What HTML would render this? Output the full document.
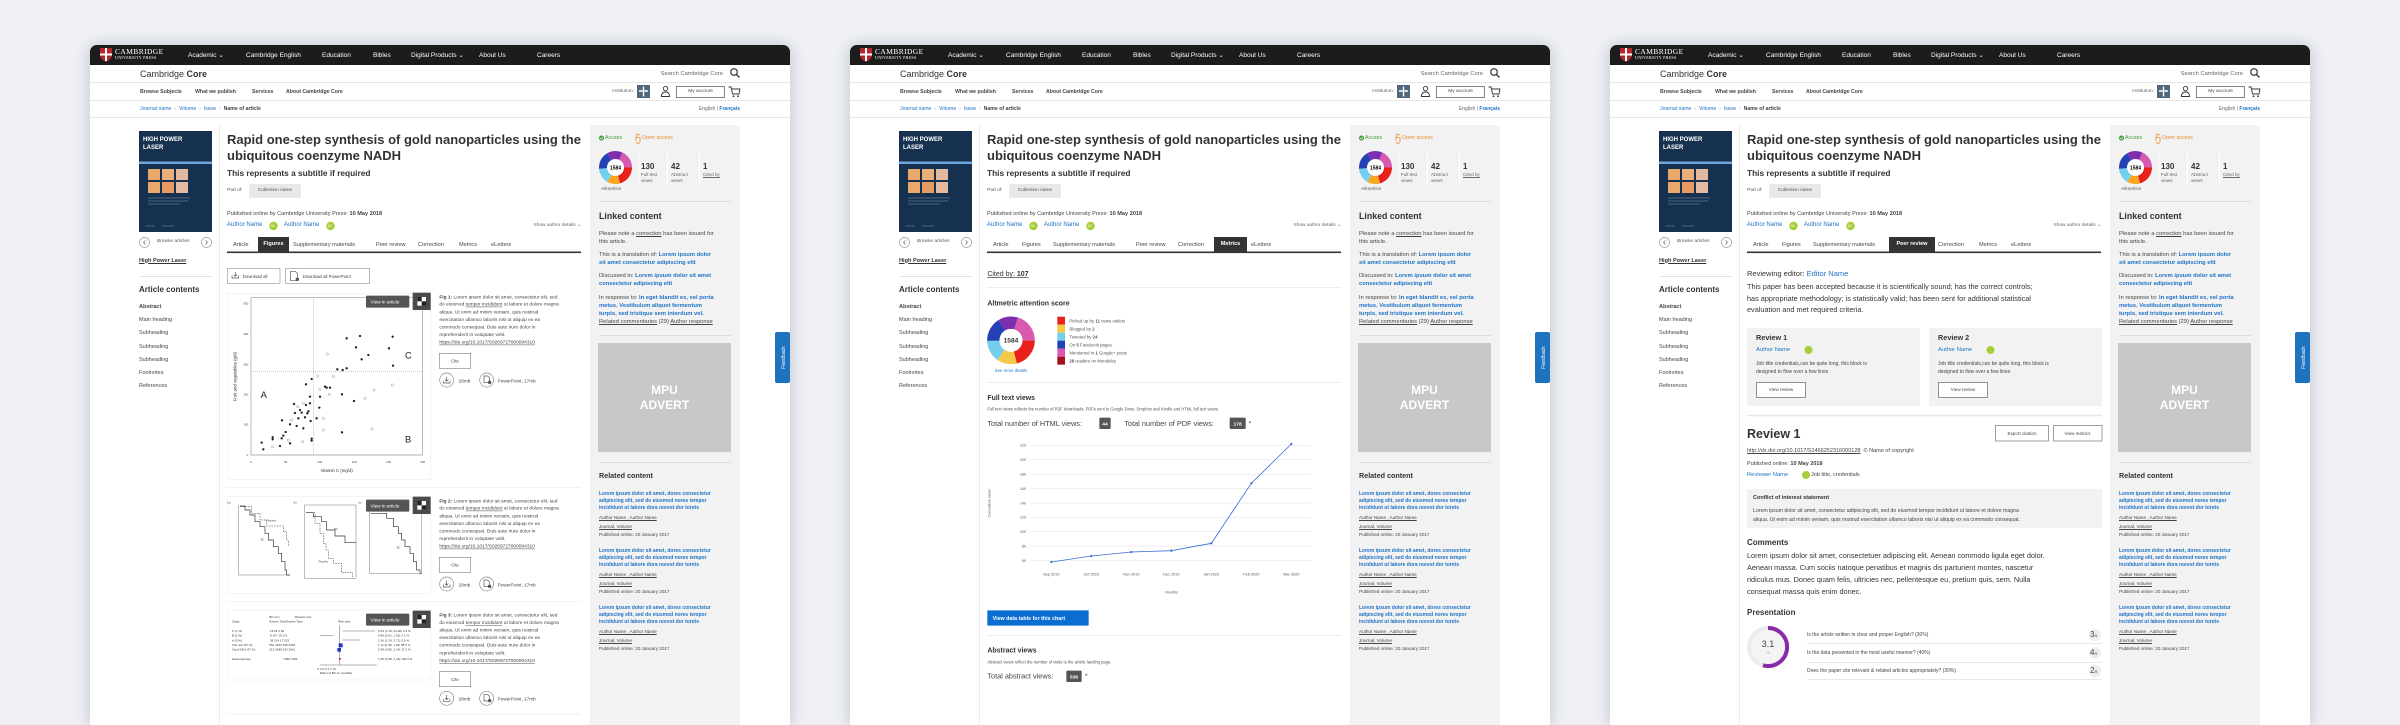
<!DOCTYPE html>
<html><head><meta charset="utf-8">
<style>
*{box-sizing:border-box}
body{margin:0;width:2400px;height:718px;background:#eef0f5;position:relative;overflow:hidden;font-family:"Liberation Sans",Arial,sans-serif;color:#333}
.p{position:absolute;top:45px;width:700px;height:680px;background:#fff;border-radius:7px 7px 0 0;box-shadow:0 0 14px rgba(60,70,110,.28);overflow:hidden}
.a{position:absolute;white-space:nowrap;line-height:1.2}
.b{font-weight:bold}
.bl{color:#1f72c6}
.u{text-decoration:underline}
.nv{font-size:6.5px;color:#fff;top:7px}
.nr{font-size:5.2px;color:#444;font-weight:bold;top:44px}
.tb{font-size:5.6px;color:#444;top:196.6px}
.tba{position:absolute;top:192px;height:15px;background:#333;color:#fff;font-weight:bold;font-size:5.6px;text-align:center;line-height:15px}
.lc{font-size:5.5px;color:#444;left:49px}
.sp{font-size:5.8px;line-height:8px;color:#444;left:509px;white-space:nowrap}
.rc{font-size:5px;line-height:7px;left:509px}
.rm{font-size:4.6px;color:#444;left:509px}
svg text{font-family:"Liberation Sans",Arial,sans-serif}
</style></head><body>

<!-- ================= PANEL 1 ================= -->
<div class="p" style="left:90px">
<div class="a" style="left:0;top:0;width:700px;height:20px;background:#1c1c1c"></div>
<div class="a" style="left:500px;top:80px;width:150px;height:620px;background:#f2f2f2;border-radius:3px"></div>
<svg class="a" style="left:0;top:0" width="700" height="680">
<path d="M10 3H22V10Q22 14 16 17Q10 14 10 10Z" fill="#b2282e"/><path d="M15 3H17V16H15ZM10 8.5H22V10.5H10Z" fill="#fff"/>
<path d="M0 37.5H700M0 55.5H700M0 72.5H700" stroke="#e6e6e6"/>
<path d="M129.5 79V680" stroke="#ececec"/>
<circle cx="644" cy="27" r="3.3" stroke="#333" stroke-width="1.2" fill="none"/><path d="M646.5 29.5L649.5 32.5" stroke="#333" stroke-width="1.3"/>
<rect x="547" y="40" width="13" height="13" fill="#51677d"/><path d="M553.5 41.5V51.5M549 46H558" stroke="#fff" stroke-width="1.4"/>
<circle cx="575.5" cy="43.5" r="2.2" stroke="#333" fill="none" stroke-width=".9"/><path d="M571.5 51.5Q571.5 47 575.5 47Q579.5 47 579.5 51.5Z" stroke="#333" fill="none" stroke-width=".9"/>
<rect x="586.5" y="41.5" width="48" height="11" stroke="#666" fill="none" stroke-width=".8"/>
<path d="M638.5 42H641L642.5 49H649L650 44H641.5" stroke="#333" fill="none" stroke-width=".9"/><circle cx="643.5" cy="51.3" r=".9" fill="#333"/><circle cx="648" cy="51.3" r=".9" fill="#333"/>
<rect x="49" y="86" width="73" height="101" fill="#16314f"/><rect x="49" y="116.5" width="73" height="2.5" fill="#6fa6db"/>
<rect x="58" y="124" width="12" height="11" fill="#e8a96a"/><rect x="72" y="124" width="12" height="11" fill="#e9b07a"/><rect x="86" y="124" width="12" height="11" fill="#e5b8a0"/>
<rect x="58" y="137" width="12" height="11" fill="#e8a96a"/><rect x="72" y="137" width="12" height="11" fill="#e79c62"/><rect x="86" y="137" width="12" height="11" fill="#e5b8a0"/>
<path d="M58 153H100M58 156H98M58 159H90M55 181H65M72 181H84" stroke="#5e7792" stroke-width=".8"/>
<circle cx="54.5" cy="197.5" r="5" stroke="#999" fill="#fff" stroke-width=".7"/><path d="M55.5 195.5L53.5 197.5L55.5 199.5" stroke="#666" fill="none" stroke-width=".7"/>
<circle cx="116.5" cy="197.5" r="5" stroke="#999" fill="#fff" stroke-width=".7"/><path d="M115.5 195.5L117.5 197.5L115.5 199.5" stroke="#666" fill="none" stroke-width=".7"/>
<path d="M49 231.5H122" stroke="#e2e2e2"/>
<rect x="137" y="206.5" width="354" height="1.6" fill="#333"/>
<circle cx="183.5" cy="181" r="4.2" fill="#a6ce39"/><circle cx="240.5" cy="181" r="4.2" fill="#a6ce39"/>
<circle cx="511.5" cy="93" r="2.5" fill="#3b9c37"/><path d="M510.3 93L511.2 94L512.9 92" stroke="#fff" stroke-width=".7" fill="none"/>
<path d="M546 95.5V92.5H550V96.5A2 2 0 0 1 546 96.5M546.6 92.5V90.5A1.4 1.4 0 0 1 549.4 90.5" stroke="#ee8a2d" fill="none" stroke-width=".8"/>
<g fill="none" stroke-width="8"><circle cx="525.5" cy="122.5" r="12.5" stroke="#e8221b" stroke-dasharray="16 80" stroke-dashoffset="0"/><circle cx="525.5" cy="122.5" r="12.5" stroke="#f7a823" stroke-dasharray="10 80" stroke-dashoffset="-16"/><circle cx="525.5" cy="122.5" r="12.5" stroke="#74cfee" stroke-dasharray="12 80" stroke-dashoffset="-26"/><circle cx="525.5" cy="122.5" r="12.5" stroke="#2440b5" stroke-dasharray="14 80" stroke-dashoffset="-38"/><circle cx="525.5" cy="122.5" r="12.5" stroke="#7b2fb0" stroke-dasharray="12 80" stroke-dashoffset="-52"/><circle cx="525.5" cy="122.5" r="12.5" stroke="#d85ab0" stroke-dasharray="15 80" stroke-dashoffset="-64"/></g>
<circle cx="525.5" cy="122.5" r="8.3" fill="#fff"/><text x="525.5" y="124.3" font-size="5" text-anchor="middle" font-weight="bold">1584</text>
<path d="M548.5 106V139M577.5 106V139M609.5 106V139" stroke="#fff" stroke-width="1"/>
<path d="M509 156.5H641M509 290.5H641M509 417.5H641" stroke="#dcdcdc"/>
<rect x="508" y="298" width="133" height="109" fill="#c8c8c8"/>
<rect x="685" y="287" width="15" height="51" rx="2" fill="#1e73be"/><text transform="translate(695 312.5) rotate(-90)" font-size="5.2" fill="#fff" text-anchor="middle">Feedback</text>
</svg>
<div class="a" style="left:25px;top:2px;font-family:'Liberation Serif',serif;font-size:7.5px;color:#fff;letter-spacing:.4px">CAMBRIDGE</div>
<div class="a" style="left:25px;top:11px;font-family:'Liberation Serif',serif;font-size:4px;color:#fff;letter-spacing:.3px">UNIVERSITY PRESS</div>
<div class="a nv" style="left:98px">Academic ⌄</div><div class="a nv" style="left:156px">Cambridge English</div><div class="a nv" style="left:232px">Education</div><div class="a nv" style="left:283px">Bibles</div><div class="a nv" style="left:321px">Digital Products ⌄</div><div class="a nv" style="left:389px">About Us</div><div class="a nv" style="left:447px">Careers</div>
<div class="a" style="left:50px;top:23.6px;font-size:9px;color:#333">Cambridge <b>Core</b></div>
<div class="a" style="right:67px;top:25.5px;font-size:5.8px;color:#666">Search Cambridge Core</div>
<div class="a nr" style="left:50px">Browse Subjects</div><div class="a nr" style="left:105px">What we publish</div><div class="a nr" style="left:162px">Services</div><div class="a nr" style="left:196px">About Cambridge Core</div>
<div class="a" style="right:156px;top:44px;font-size:4.8px;color:#666">Institution:</div>
<div class="a" style="left:586px;top:44px;width:49px;text-align:center;font-size:4.8px;color:#444">My account</div>
<div class="a" style="left:50px;top:61px;font-size:5.2px;color:#999"><span class="bl">Journal name</span> &nbsp;›&nbsp; <span class="bl">Volume</span> &nbsp;›&nbsp; <span class="bl">Issue</span> &nbsp;›&nbsp; <b style="color:#444">Name of article</b></div>
<div class="a" style="right:50px;top:61px;font-size:5px;color:#666">English | <b class="bl">Français</b></div>
<div class="a b" style="left:53px;top:92px;font-size:6px;color:#fff;line-height:7.5px">HIGH POWER<br>LASER</div>
<div class="a" style="left:67px;top:194.3px;font-size:4.8px;color:#555">Browse articles</div>
<div class="a b u" style="left:49px;top:212.6px;font-size:5.6px;color:#333">High Power Laser</div>
<div class="a b" style="left:49px;top:240.2px;font-size:8px">Article contents</div>
<div class="a lc b" style="top:258.7px">Abstract</div><div class="a lc" style="top:271.7px">Main heading</div><div class="a lc" style="top:284.7px">Subheading</div><div class="a lc" style="top:298.7px">Subheading</div><div class="a lc" style="top:311.7px">Subheading</div><div class="a lc" style="top:324.7px">Footnotes</div><div class="a lc" style="top:337.7px">References</div>
<div class="a b" style="left:137px;top:87px;font-size:13px;line-height:15.5px">Rapid one-step synthesis of gold nanoparticles using the<br>ubiquitous coenzyme NADH</div>
<div class="a b" style="left:137px;top:124px;font-size:8.3px">This represents a subtitle if required</div>
<div class="a" style="left:137px;top:143px;font-size:4.8px;color:#555">Part of:</div>
<div class="a" style="left:159px;top:139px;width:52px;height:14px;background:#e8e8e8;border-radius:2px;font-size:4.8px;line-height:14px;text-align:center;color:#555">Collection name</div>
<div class="a" style="left:137px;top:165.6px;font-size:5.6px;color:#444">Published online by Cambridge University Press: <b>10 May 2018</b></div>
<div class="a bl" style="left:137px;top:177.4px;font-size:6px">Author Name</div><div class="a bl" style="left:194px;top:177.4px;font-size:6px">Author Name</div>
<div class="a" style="left:181.3px;top:179px;font-size:3.6px;color:#fff">iD</div><div class="a" style="left:238.3px;top:179px;font-size:3.6px;color:#fff">iD</div>
<div class="a" style="right:209px;top:178px;font-size:4.8px;color:#666">Show author details ⌄</div>
<div class="a" style="left:515px;top:89.8px;font-size:5.3px;color:#3b9c37">Access</div><div class="a" style="left:552px;top:89.8px;font-size:5.3px;color:#ee8a2d">Open access</div>
<div class="a" style="left:511px;top:141.2px;font-size:4.6px;color:#555">Altmetrics</div>
<div class="a b" style="left:551px;top:117px;font-size:8px">130</div><div class="a" style="left:551px;top:127px;font-size:4.6px;line-height:6.2px;color:#666">Full text<br>views</div>
<div class="a b" style="left:581px;top:117px;font-size:8px">42</div><div class="a" style="left:581px;top:127px;font-size:4.6px;line-height:6.2px;color:#666">Abstract<br>views</div>
<div class="a b" style="left:613px;top:117px;font-size:8px">1</div><div class="a u" style="left:613px;top:127px;font-size:4.6px;color:#666">Cited by</div>
<div class="a b" style="left:509px;top:165.7px;font-size:8.8px">Linked content</div>
<div class="a sp" style="top:185px">Please note a <u>correction</u> has been issued for<br>this article.</div>
<div class="a sp" style="top:206px">This is a translation of: <b class="bl">Lorem ipsum dolor</b><br><b class="bl">sit amet consectetur adipiscing elit</b></div>
<div class="a sp" style="top:227px">Discussed in: <b class="bl">Lorem ipsum dolor sit amet</b><br><b class="bl">consectetur adipiscing elit</b></div>
<div class="a sp" style="top:249px">In response to: <b class="bl">In eget blandit ex, vel porta</b><br><b class="bl">metus. Vestibulum aliquet fermentum</b><br><b class="bl">turpis, sed tristique sem interdum vel.</b><br><u>Related commentaries</u> (29) <u>Author response</u></div>
<div class="a b" style="left:508px;top:338px;width:133px;text-align:center;font-size:12px;line-height:14.5px;color:#fff">MPU<br>ADVERT</div>
<div class="a b" style="left:509px;top:426.7px;font-size:7.2px">Related content</div>
<div class="a rc b bl" style="top:445.5px">Lorem ipsum dolor sit amet, dores consectetur<br>adipiscing elit, sed do eiusmod nores tempor<br>incididunt ut labore dora norest dor torets</div>
<div class="a rm u" style="top:470px">Author Name , Author Name</div><div class="a rm u" style="top:479px">Journal, Volume</div><div class="a rm" style="top:487px">Published online: 20 January 2017</div>
<div class="a rc b bl" style="top:502.5px">Lorem ipsum dolor sit amet, dores consectetur<br>adipiscing elit, sed do eiusmod nores tempor<br>incididunt ut labore dora norest dor torets</div>
<div class="a rm u" style="top:527px">Author Name , Author Name</div><div class="a rm u" style="top:536px">Journal, Volume</div><div class="a rm" style="top:544px">Published online: 20 January 2017</div>
<div class="a rc b bl" style="top:559.5px">Lorem ipsum dolor sit amet, dores consectetur<br>adipiscing elit, sed do eiusmod nores tempor<br>incididunt ut labore dora norest dor torets</div>
<div class="a rm u" style="top:584px">Author Name , Author Name</div><div class="a rm u" style="top:593px">Journal, Volume</div><div class="a rm" style="top:601px">Published online: 20 January 2017</div>
<!-- tabs -->
<div class="a tb" style="left:143px">Article</div>
<div class="tba" style="left:168px;width:31px">Figures</div>
<div class="a tb" style="left:203px">Supplementary materials</div><div class="a tb" style="left:286px">Peer review</div><div class="a tb" style="left:328px">Correction</div><div class="a tb" style="left:369px">Metrics</div><div class="a tb" style="left:401px">eLetters</div>
<!-- main: figures -->
<svg class="a" style="left:0;top:0" width="700" height="680">
<g transform="translate(130 205) scale(.33333)" font-size="14" fill="#444">
<rect x="22" y="55" width="158" height="45" fill="#fff" stroke="#999" stroke-width="2"/><text x="68" y="84" font-size="13">Download all</text>
<path d="M36 76v8h20v-8M46 66v13M41 74l5 5 5-5" stroke="#555" stroke-width="2" fill="none"/>
<rect x="197" y="55" width="252" height="45" fill="#fff" stroke="#999" stroke-width="2"/><text x="248" y="84" font-size="13">Download all PowerPoint</text>
<path d="M212 64h14l6 6v22h-20z" stroke="#555" stroke-width="2" fill="none"/><circle cx="232" cy="88" r="5" fill="#555"/>
<rect x="22" y="130" width="610" height="558" fill="#fff" stroke="#eee" stroke-width="2"/>
<path d="M93 143V615H608V143H93" stroke="#999" stroke-width="2" fill="none"/>
<path d="M280 143V615M93 364H608" stroke="#aaa" stroke-width="2" stroke-dasharray="3 3"/>
<g font-size="9" text-anchor="end"><text x="85" y="163">500</text><text x="85" y="255">400</text><text x="85" y="346">300</text><text x="85" y="437">200</text><text x="85" y="527">100</text><text x="85" y="618">0</text></g>
<g font-size="9" text-anchor="middle"><text x="93" y="639">0</text><text x="197" y="639">50</text><text x="299" y="639">100</text><text x="403" y="639">150</text><text x="506" y="639">200</text><text x="608" y="639">250</text></g>
<text x="350" y="666" font-size="13" text-anchor="middle" fill="#333">Vitamin C (mg/d)</text>
<text transform="translate(50 380) rotate(-90)" font-size="13" text-anchor="middle" fill="#333">Fruit and vegetables (g/d)</text>
<text x="122" y="444" font-size="28" fill="#222">A</text><text x="555" y="578" font-size="28" fill="#222">B</text><text x="555" y="326" font-size="28" fill="#222">C</text>
<g fill="#222"><circle cx="125" cy="578" r="3.5"/><circle cx="130" cy="598" r="3.5"/><circle cx="158" cy="562" r="3.5"/><circle cx="158" cy="568" r="3.5"/><circle cx="180" cy="588" r="3.5"/><circle cx="185" cy="565" r="3.5"/><circle cx="190" cy="557" r="3.5"/><circle cx="186" cy="511" r="3.5"/><circle cx="197" cy="546" r="3.5"/><circle cx="210" cy="523" r="3.5"/><circle cx="210" cy="580" r="3.5"/><circle cx="222" cy="462" r="3.5"/><circle cx="225" cy="489" r="3.5"/><circle cx="230" cy="528" r="3.5"/><circle cx="235" cy="505" r="3.5"/><circle cx="240" cy="480" r="3.5"/><circle cx="245" cy="488" r="3.5"/><circle cx="250" cy="535" r="3.5"/><circle cx="255" cy="502" r="3.5"/><circle cx="258" cy="465" r="3.5"/><circle cx="262" cy="490" r="3.5"/><circle cx="265" cy="484" r="3.5"/><circle cx="270" cy="460" r="3.5"/><circle cx="272" cy="513" r="3.5"/><circle cx="275" cy="566" r="3.5"/><circle cx="270" cy="440" r="3.5"/><circle cx="275" cy="387" r="3.5"/><circle cx="258" cy="403" r="3.5"/><circle cx="300" cy="440" r="3.5"/><circle cx="298" cy="473" r="3.5"/><circle cx="290" cy="505" r="3.5"/><circle cx="315" cy="410" r="3.5"/><circle cx="320" cy="413" r="3.5"/><circle cx="330" cy="413" r="3.5"/><circle cx="366" cy="433" r="3.5"/><circle cx="352" cy="358" r="3.5"/><circle cx="368" cy="360" r="3.5"/><circle cx="380" cy="355" r="3.5"/><circle cx="380" cy="265" r="3.5"/><circle cx="408" cy="292" r="3.5"/><circle cx="420" cy="258" r="3.5"/><circle cx="425" cy="328" r="3.5"/><circle cx="445" cy="315" r="3.5"/><circle cx="507" cy="295" r="3.5"/><circle cx="518" cy="260" r="3.5"/><circle cx="519" cy="347" r="3.5"/><circle cx="402" cy="453" r="3.5"/><circle cx="366" cy="547" r="3.5"/><circle cx="275" cy="572" r="3.5"/></g>
<g fill="none" stroke="#999" stroke-width="1.5"><circle cx="293" cy="378" r="3.5"/><circle cx="322" cy="312" r="3.5"/><circle cx="340" cy="380" r="3.5"/><circle cx="310" cy="505" r="3.5"/><circle cx="435" cy="445" r="3.5"/><circle cx="462" cy="420" r="3.5"/><circle cx="517" cy="405" r="3.5"/><circle cx="250" cy="460" r="3.5"/><circle cx="233" cy="470" r="3.5"/><circle cx="215" cy="510" r="3.5"/><circle cx="248" cy="575" r="3.5"/><circle cx="205" cy="570" r="3.5"/><circle cx="158" cy="590" r="3.5"/><circle cx="310" cy="540" r="3.5"/><circle cx="456" cy="537" r="3.5"/><circle cx="328" cy="433" r="3.5"/><circle cx="300" cy="418" r="3.5"/></g>
<!-- fig1 overlays -->
<rect x="438" y="137" width="130" height="36" rx="3" fill="#555"/><text x="452" y="160" fill="#fff">View in article</text>
<rect x="578" y="128" width="54" height="52" fill="#4a4a4a"/><rect x="592" y="141" width="26" height="26" fill="#fff"/><rect x="592" y="141" width="13" height="13" fill="#222"/><rect x="605" y="154" width="13" height="13" fill="#222"/>
<g font-size="14.5"><text x="658" y="145"><tspan font-weight="bold">Fig 1:</tspan> Lorem ipsum dolor sit amet, consectetur  elit, sed</text><text x="658" y="167">do eiusmod <tspan text-decoration="underline">tempor incididunt</tspan> ut labore et dolore magna</text><text x="658" y="190">aliqua. Ut enim ad minim veniam, quis nostrud</text><text x="658" y="213">exercitation ullamco laboris nisi ut aliquip ex ea</text><text x="658" y="235">commodo consequat. Duis aute irure dolor in</text><text x="658" y="258">reprehenderit in voluptate velit.</text><text x="658" y="281" text-decoration="underline">https://doi.org/10.1017/S0269727000004310</text></g>
<rect x="658" y="310" width="94" height="45" fill="#fff" stroke="#888" stroke-width="2"/><text x="705" y="338" font-size="13" text-anchor="middle">Cite</text>
<circle cx="680" cy="390" r="21" fill="none" stroke="#888" stroke-width="2"/><path d="M670 392v7h20v-7M680 380v14M675 389l5 5 5-5" stroke="#555" stroke-width="2" fill="none"/><text x="716" y="397">28mb</text>
<circle cx="800" cy="390" r="21" fill="none" stroke="#888" stroke-width="2"/><path d="M792 378h11l5 5v15h-16z" stroke="#555" stroke-width="2" fill="none"/><circle cx="809" cy="397" r="5" fill="#555"/><text x="833" y="397">PowerPoint, 17mb</text>
<path d="M22 712H1085" stroke="#ccc" stroke-width="2" stroke-dasharray="3 5"/>
<!-- fig2 -->
<rect x="22" y="740" width="610" height="290" fill="#fff" stroke="#eee" stroke-width="2"/>
<g fill="none" stroke="#777" stroke-width="1.5"><path d="M55 765V975H210"/><path d="M253 765V985H408V765Z"/><path d="M448 765V970H605V765"/></g>
<g fill="none" stroke="#333" stroke-width="2"><path d="M60 768H75V780H90V795H105V815H120V830H135V850H145V870H160V890H175V910H185V935H195V960H200V975H210"/><path d="M258 788H280V800H305V815H320V840H345V858H375V878H408"/><path d="M452 790H500V805H520V830H535V850H545V870H555V890H570V910H580V935H590V960H600V970H605"/></g>
<g fill="none" stroke="#333" stroke-width="1.5" stroke-dasharray="5 3"><path d="M60 770H95V790H120V810H140V828H190V845H200V870H205V890"/><path d="M258 788H285V820H300V850H310V880H318V900H325V925H340V940H365V968H398V985"/></g>
<g font-size="8"><text x="140" y="815">Placebo</text><text x="122" y="872">BC</text><text x="342" y="840">BC</text><text x="296" y="938">Placebo</text><text x="530" y="895">BC</text><text x="22" y="760">(a)</text><text x="220" y="760">(b)</text><text x="415" y="760">(c)</text></g>
<rect x="438" y="749" width="130" height="36" rx="3" fill="#555"/><text x="452" y="772" fill="#fff">View in article</text>
<rect x="578" y="740" width="54" height="52" fill="#4a4a4a"/><rect x="592" y="753" width="26" height="26" fill="#fff"/><rect x="592" y="753" width="13" height="13" fill="#222"/><rect x="605" y="766" width="13" height="13" fill="#222"/>
<g font-size="14.5"><text x="658" y="757"><tspan font-weight="bold">Fig 2:</tspan> Lorem ipsum dolor sit amet, consectetur  elit, sed</text><text x="658" y="779">do eiusmod <tspan text-decoration="underline">tempor incididunt</tspan> ut labore et dolore magna</text><text x="658" y="802">aliqua. Ut enim ad minim veniam, quis nostrud</text><text x="658" y="825">exercitation ullamco laboris nisi ut aliquip ex ea</text><text x="658" y="847">commodo consequat. Duis aute irure dolor in</text><text x="658" y="870">reprehenderit in voluptate velit.</text><text x="658" y="893" text-decoration="underline">https://doi.org/10.1017/S0269727000004310</text></g>
<rect x="658" y="922" width="94" height="45" fill="#fff" stroke="#888" stroke-width="2"/><text x="705" y="950" font-size="13" text-anchor="middle">Cite</text>
<circle cx="680" cy="1002" r="21" fill="none" stroke="#888" stroke-width="2"/><path d="M670 1004v7h20v-7M680 992v14M675 1001l5 5 5-5" stroke="#555" stroke-width="2" fill="none"/><text x="716" y="1009">28mb</text>
<circle cx="800" cy="1002" r="21" fill="none" stroke="#888" stroke-width="2"/><path d="M792 990h11l5 5v15h-16z" stroke="#555" stroke-width="2" fill="none"/><circle cx="809" cy="1009" r="5" fill="#555"/><text x="833" y="1009">PowerPoint, 17mb</text>
<path d="M22 1055H1085" stroke="#ccc" stroke-width="2" stroke-dasharray="3 5"/>
<!-- fig3 -->
<rect x="22" y="1080" width="610" height="210" fill="#fff" stroke="#eee" stroke-width="2"/>
<g font-size="9" fill="#333"><text x="148" y="1104">BC arm</text><text x="224" y="1104">Placebo arm</text><text x="36" y="1118">Study</text><text x="148" y="1118">Events  Total  Events  Total</text><text x="354" y="1118">Risk ratio</text>
<text x="36" y="1146">C (1 %)</text><text x="150" y="1146">13      81      2      69</text><text x="36" y="1160">B (2 %)</text><text x="150" y="1160">8      167    19     171</text><text x="36" y="1174">A (3 %)</text><text x="150" y="1174">38     214    17     223</text><text x="36" y="1188">The rest (57 %)</text><text x="148" y="1188">551   4160   498   4183</text><text x="36" y="1202">Cig 6-18/d (37 %)</text><text x="148" y="1202">313   2688   314   2641</text><text x="36" y="1230">Heterogeneity</text><text x="190" y="1230">7280          7284</text>
<text x="474" y="1146">0·54 (1·28, 23·60) 0·3 %</text><text x="474" y="1160">0·46 (0·21, 1·02)  2·1 %</text><text x="474" y="1174">2·16 (1·24, 3·71)  3·0 %</text><text x="474" y="1188">1·11 (0·99, 1·26)  58·5 %</text><text x="474" y="1202">0·99 (0·85, 1·14)  37·2 %</text><text x="474" y="1230">1·06 (0·98, 1·16)  100·0 %</text>
<text x="292" y="1260">0·3 0·5    1     2          10</text><text x="300" y="1272">Effect of BC on mortality</text></g>
<path d="M358 1125V1245M300 1245H470M300 1156H340M368 1143H465M368 1170H420" stroke="#666" stroke-width="1.5"/>
<rect x="356" y="1180" width="12" height="12" fill="#2233cc"/><rect x="352" y="1194" width="11" height="11" fill="#2233cc"/><rect x="358" y="1224" width="5" height="5" fill="#d22"/>
<rect x="438" y="1091" width="130" height="36" rx="3" fill="#555"/><text x="452" y="1114" fill="#fff">View in article</text>
<rect x="578" y="1082" width="54" height="52" fill="#4a4a4a"/><rect x="592" y="1095" width="26" height="26" fill="#fff"/><rect x="592" y="1095" width="13" height="13" fill="#222"/><rect x="605" y="1108" width="13" height="13" fill="#222"/>
<g font-size="14.5"><text x="658" y="1099"><tspan font-weight="bold">Fig 3:</tspan> Lorem ipsum dolor sit amet, consectetur  elit, sed</text><text x="658" y="1122">do eiusmod <tspan text-decoration="underline">tempor incididunt</tspan> ut labore et dolore magna</text><text x="658" y="1145">aliqua. Ut enim ad minim veniam, quis nostrud</text><text x="658" y="1167">exercitation ullamco laboris nisi ut aliquip ex ea</text><text x="658" y="1190">commodo consequat. Duis aute irure dolor in</text><text x="658" y="1213">reprehenderit in voluptate velit.</text><text x="658" y="1236" text-decoration="underline">https://doi.org/10.1017/S0269727000004310</text></g>
<rect x="658" y="1265" width="94" height="45" fill="#fff" stroke="#888" stroke-width="2"/><text x="705" y="1293" font-size="13" text-anchor="middle">Cite</text>
<circle cx="680" cy="1345" r="21" fill="none" stroke="#888" stroke-width="2"/><path d="M670 1347v7h20v-7M680 1335v14M675 1344l5 5 5-5" stroke="#555" stroke-width="2" fill="none"/><text x="716" y="1352">28mb</text>
<circle cx="800" cy="1345" r="21" fill="none" stroke="#888" stroke-width="2"/><path d="M792 1333h11l5 5v15h-16z" stroke="#555" stroke-width="2" fill="none"/><circle cx="809" cy="1352" r="5" fill="#555"/><text x="833" y="1352">PowerPoint, 17mb</text>
<path d="M22 1392H1085" stroke="#ccc" stroke-width="2" stroke-dasharray="3 5"/>
</g></svg>
</div>

<!-- ================= PANEL 2 ================= -->
<div class="p" style="left:850px">
<div class="a" style="left:0;top:0;width:700px;height:20px;background:#1c1c1c"></div>
<div class="a" style="left:500px;top:80px;width:150px;height:620px;background:#f2f2f2;border-radius:3px"></div>
<svg class="a" style="left:0;top:0" width="700" height="680">
<path d="M10 3H22V10Q22 14 16 17Q10 14 10 10Z" fill="#b2282e"/><path d="M15 3H17V16H15ZM10 8.5H22V10.5H10Z" fill="#fff"/>
<path d="M0 37.5H700M0 55.5H700M0 72.5H700" stroke="#e6e6e6"/>
<path d="M129.5 79V680" stroke="#ececec"/>
<circle cx="644" cy="27" r="3.3" stroke="#333" stroke-width="1.2" fill="none"/><path d="M646.5 29.5L649.5 32.5" stroke="#333" stroke-width="1.3"/>
<rect x="547" y="40" width="13" height="13" fill="#51677d"/><path d="M553.5 41.5V51.5M549 46H558" stroke="#fff" stroke-width="1.4"/>
<circle cx="575.5" cy="43.5" r="2.2" stroke="#333" fill="none" stroke-width=".9"/><path d="M571.5 51.5Q571.5 47 575.5 47Q579.5 47 579.5 51.5Z" stroke="#333" fill="none" stroke-width=".9"/>
<rect x="586.5" y="41.5" width="48" height="11" stroke="#666" fill="none" stroke-width=".8"/>
<path d="M638.5 42H641L642.5 49H649L650 44H641.5" stroke="#333" fill="none" stroke-width=".9"/><circle cx="643.5" cy="51.3" r=".9" fill="#333"/><circle cx="648" cy="51.3" r=".9" fill="#333"/>
<rect x="49" y="86" width="73" height="101" fill="#16314f"/><rect x="49" y="116.5" width="73" height="2.5" fill="#6fa6db"/>
<rect x="58" y="124" width="12" height="11" fill="#e8a96a"/><rect x="72" y="124" width="12" height="11" fill="#e9b07a"/><rect x="86" y="124" width="12" height="11" fill="#e5b8a0"/>
<rect x="58" y="137" width="12" height="11" fill="#e8a96a"/><rect x="72" y="137" width="12" height="11" fill="#e79c62"/><rect x="86" y="137" width="12" height="11" fill="#e5b8a0"/>
<path d="M58 153H100M58 156H98M58 159H90M55 181H65M72 181H84" stroke="#5e7792" stroke-width=".8"/>
<circle cx="54.5" cy="197.5" r="5" stroke="#999" fill="#fff" stroke-width=".7"/><path d="M55.5 195.5L53.5 197.5L55.5 199.5" stroke="#666" fill="none" stroke-width=".7"/>
<circle cx="116.5" cy="197.5" r="5" stroke="#999" fill="#fff" stroke-width=".7"/><path d="M115.5 195.5L117.5 197.5L115.5 199.5" stroke="#666" fill="none" stroke-width=".7"/>
<path d="M49 231.5H122" stroke="#e2e2e2"/>
<rect x="137" y="206.5" width="354" height="1.6" fill="#333"/>
<circle cx="183.5" cy="181" r="4.2" fill="#a6ce39"/><circle cx="240.5" cy="181" r="4.2" fill="#a6ce39"/>
<circle cx="511.5" cy="93" r="2.5" fill="#3b9c37"/><path d="M510.3 93L511.2 94L512.9 92" stroke="#fff" stroke-width=".7" fill="none"/>
<path d="M546 95.5V92.5H550V96.5A2 2 0 0 1 546 96.5M546.6 92.5V90.5A1.4 1.4 0 0 1 549.4 90.5" stroke="#ee8a2d" fill="none" stroke-width=".8"/>
<g fill="none" stroke-width="8"><circle cx="525.5" cy="122.5" r="12.5" stroke="#e8221b" stroke-dasharray="16 80" stroke-dashoffset="0"/><circle cx="525.5" cy="122.5" r="12.5" stroke="#f7a823" stroke-dasharray="10 80" stroke-dashoffset="-16"/><circle cx="525.5" cy="122.5" r="12.5" stroke="#74cfee" stroke-dasharray="12 80" stroke-dashoffset="-26"/><circle cx="525.5" cy="122.5" r="12.5" stroke="#2440b5" stroke-dasharray="14 80" stroke-dashoffset="-38"/><circle cx="525.5" cy="122.5" r="12.5" stroke="#7b2fb0" stroke-dasharray="12 80" stroke-dashoffset="-52"/><circle cx="525.5" cy="122.5" r="12.5" stroke="#d85ab0" stroke-dasharray="15 80" stroke-dashoffset="-64"/></g>
<circle cx="525.5" cy="122.5" r="8.3" fill="#fff"/><text x="525.5" y="124.3" font-size="5" text-anchor="middle" font-weight="bold">1584</text>
<path d="M548.5 106V139M577.5 106V139M609.5 106V139" stroke="#fff" stroke-width="1"/>
<path d="M509 156.5H641M509 290.5H641M509 417.5H641" stroke="#dcdcdc"/>
<rect x="508" y="298" width="133" height="109" fill="#c8c8c8"/>
<rect x="685" y="287" width="15" height="51" rx="2" fill="#1e73be"/><text transform="translate(695 312.5) rotate(-90)" font-size="5.2" fill="#fff" text-anchor="middle">Feedback</text>
</svg>
<div class="a" style="left:25px;top:2px;font-family:'Liberation Serif',serif;font-size:7.5px;color:#fff;letter-spacing:.4px">CAMBRIDGE</div>
<div class="a" style="left:25px;top:11px;font-family:'Liberation Serif',serif;font-size:4px;color:#fff;letter-spacing:.3px">UNIVERSITY PRESS</div>
<div class="a nv" style="left:98px">Academic ⌄</div><div class="a nv" style="left:156px">Cambridge English</div><div class="a nv" style="left:232px">Education</div><div class="a nv" style="left:283px">Bibles</div><div class="a nv" style="left:321px">Digital Products ⌄</div><div class="a nv" style="left:389px">About Us</div><div class="a nv" style="left:447px">Careers</div>
<div class="a" style="left:50px;top:23.6px;font-size:9px;color:#333">Cambridge <b>Core</b></div>
<div class="a" style="right:67px;top:25.5px;font-size:5.8px;color:#666">Search Cambridge Core</div>
<div class="a nr" style="left:50px">Browse Subjects</div><div class="a nr" style="left:105px">What we publish</div><div class="a nr" style="left:162px">Services</div><div class="a nr" style="left:196px">About Cambridge Core</div>
<div class="a" style="right:156px;top:44px;font-size:4.8px;color:#666">Institution:</div>
<div class="a" style="left:586px;top:44px;width:49px;text-align:center;font-size:4.8px;color:#444">My account</div>
<div class="a" style="left:50px;top:61px;font-size:5.2px;color:#999"><span class="bl">Journal name</span> &nbsp;›&nbsp; <span class="bl">Volume</span> &nbsp;›&nbsp; <span class="bl">Issue</span> &nbsp;›&nbsp; <b style="color:#444">Name of article</b></div>
<div class="a" style="right:50px;top:61px;font-size:5px;color:#666">English | <b class="bl">Français</b></div>
<div class="a b" style="left:53px;top:92px;font-size:6px;color:#fff;line-height:7.5px">HIGH POWER<br>LASER</div>
<div class="a" style="left:67px;top:194.3px;font-size:4.8px;color:#555">Browse articles</div>
<div class="a b u" style="left:49px;top:212.6px;font-size:5.6px;color:#333">High Power Laser</div>
<div class="a b" style="left:49px;top:240.2px;font-size:8px">Article contents</div>
<div class="a lc b" style="top:258.7px">Abstract</div><div class="a lc" style="top:271.7px">Main heading</div><div class="a lc" style="top:284.7px">Subheading</div><div class="a lc" style="top:298.7px">Subheading</div><div class="a lc" style="top:311.7px">Subheading</div><div class="a lc" style="top:324.7px">Footnotes</div><div class="a lc" style="top:337.7px">References</div>
<div class="a b" style="left:137px;top:87px;font-size:13px;line-height:15.5px">Rapid one-step synthesis of gold nanoparticles using the<br>ubiquitous coenzyme NADH</div>
<div class="a b" style="left:137px;top:124px;font-size:8.3px">This represents a subtitle if required</div>
<div class="a" style="left:137px;top:143px;font-size:4.8px;color:#555">Part of:</div>
<div class="a" style="left:159px;top:139px;width:52px;height:14px;background:#e8e8e8;border-radius:2px;font-size:4.8px;line-height:14px;text-align:center;color:#555">Collection name</div>
<div class="a" style="left:137px;top:165.6px;font-size:5.6px;color:#444">Published online by Cambridge University Press: <b>10 May 2018</b></div>
<div class="a bl" style="left:137px;top:177.4px;font-size:6px">Author Name</div><div class="a bl" style="left:194px;top:177.4px;font-size:6px">Author Name</div>
<div class="a" style="left:181.3px;top:179px;font-size:3.6px;color:#fff">iD</div><div class="a" style="left:238.3px;top:179px;font-size:3.6px;color:#fff">iD</div>
<div class="a" style="right:209px;top:178px;font-size:4.8px;color:#666">Show author details ⌄</div>
<div class="a" style="left:515px;top:89.8px;font-size:5.3px;color:#3b9c37">Access</div><div class="a" style="left:552px;top:89.8px;font-size:5.3px;color:#ee8a2d">Open access</div>
<div class="a" style="left:511px;top:141.2px;font-size:4.6px;color:#555">Altmetrics</div>
<div class="a b" style="left:551px;top:117px;font-size:8px">130</div><div class="a" style="left:551px;top:127px;font-size:4.6px;line-height:6.2px;color:#666">Full text<br>views</div>
<div class="a b" style="left:581px;top:117px;font-size:8px">42</div><div class="a" style="left:581px;top:127px;font-size:4.6px;line-height:6.2px;color:#666">Abstract<br>views</div>
<div class="a b" style="left:613px;top:117px;font-size:8px">1</div><div class="a u" style="left:613px;top:127px;font-size:4.6px;color:#666">Cited by</div>
<div class="a b" style="left:509px;top:165.7px;font-size:8.8px">Linked content</div>
<div class="a sp" style="top:185px">Please note a <u>correction</u> has been issued for<br>this article.</div>
<div class="a sp" style="top:206px">This is a translation of: <b class="bl">Lorem ipsum dolor</b><br><b class="bl">sit amet consectetur adipiscing elit</b></div>
<div class="a sp" style="top:227px">Discussed in: <b class="bl">Lorem ipsum dolor sit amet</b><br><b class="bl">consectetur adipiscing elit</b></div>
<div class="a sp" style="top:249px">In response to: <b class="bl">In eget blandit ex, vel porta</b><br><b class="bl">metus. Vestibulum aliquet fermentum</b><br><b class="bl">turpis, sed tristique sem interdum vel.</b><br><u>Related commentaries</u> (29) <u>Author response</u></div>
<div class="a b" style="left:508px;top:338px;width:133px;text-align:center;font-size:12px;line-height:14.5px;color:#fff">MPU<br>ADVERT</div>
<div class="a b" style="left:509px;top:426.7px;font-size:7.2px">Related content</div>
<div class="a rc b bl" style="top:445.5px">Lorem ipsum dolor sit amet, dores consectetur<br>adipiscing elit, sed do eiusmod nores tempor<br>incididunt ut labore dora norest dor torets</div>
<div class="a rm u" style="top:470px">Author Name , Author Name</div><div class="a rm u" style="top:479px">Journal, Volume</div><div class="a rm" style="top:487px">Published online: 20 January 2017</div>
<div class="a rc b bl" style="top:502.5px">Lorem ipsum dolor sit amet, dores consectetur<br>adipiscing elit, sed do eiusmod nores tempor<br>incididunt ut labore dora norest dor torets</div>
<div class="a rm u" style="top:527px">Author Name , Author Name</div><div class="a rm u" style="top:536px">Journal, Volume</div><div class="a rm" style="top:544px">Published online: 20 January 2017</div>
<div class="a rc b bl" style="top:559.5px">Lorem ipsum dolor sit amet, dores consectetur<br>adipiscing elit, sed do eiusmod nores tempor<br>incididunt ut labore dora norest dor torets</div>
<div class="a rm u" style="top:584px">Author Name , Author Name</div><div class="a rm u" style="top:593px">Journal, Volume</div><div class="a rm" style="top:601px">Published online: 20 January 2017</div>
<!-- tabs -->
<div class="a tb" style="left:143px">Article</div><div class="a tb" style="left:172px">Figures</div>
<div class="a tb" style="left:203px">Supplementary materials</div><div class="a tb" style="left:286px">Peer review</div><div class="a tb" style="left:328px">Correction</div>
<div class="tba" style="left:364px;width:33px">Metrics</div>
<div class="a tb" style="left:401px">eLetters</div>
<!-- main: metrics -->
<svg class="a" style="left:0;top:0" width="700" height="680">
<g transform="translate(130 205) scale(.33333)" fill="#333">
<text x="22" y="78" font-size="21" text-decoration="underline">Cited by: <tspan font-weight="bold">107</tspan></text>
<path d="M22 113H1085M22 397H1085M22 1157H1085" stroke="#e2e2e2" stroke-width="2"/>
<text x="22" y="166" font-size="21" font-weight="bold">Altmetric attention score</text>
<g fill="none" stroke-width="37"><circle cx="93" cy="271" r="53" stroke="#e8221b" stroke-dasharray="70 400"/><circle cx="93" cy="271" r="53" stroke="#f7c948" stroke-dasharray="45 400" stroke-dashoffset="-70"/><circle cx="93" cy="271" r="53" stroke="#74cfee" stroke-dasharray="50 400" stroke-dashoffset="-115"/><circle cx="93" cy="271" r="53" stroke="#2440b5" stroke-dasharray="55 400" stroke-dashoffset="-165"/><circle cx="93" cy="271" r="53" stroke="#7b2fb0" stroke-dasharray="45 400" stroke-dashoffset="-220"/><circle cx="93" cy="271" r="53" stroke="#d85ab0" stroke-dasharray="70 400" stroke-dashoffset="-265"/></g>
<circle cx="93" cy="271" r="34" fill="#fff"/><text x="93" y="278" font-size="20" font-weight="bold" text-anchor="middle">1584</text>
<text x="93" y="366" font-size="13" text-anchor="middle" fill="#1f72c6">See more details</text>
<rect x="232" y="200" width="23" height="24" fill="#e8221b"/><rect x="232" y="224" width="23" height="24" fill="#f7c948"/><rect x="232" y="248" width="23" height="24" fill="#74cfee"/><rect x="232" y="272" width="23" height="24" fill="#2440b5"/><rect x="232" y="296" width="23" height="24" fill="#d85ab0"/><rect x="232" y="320" width="23" height="24" fill="#a3101a"/>
<g font-size="13" fill="#555"><text x="268" y="217">Picked up by <tspan font-weight="bold">11</tspan> news outlets</text><text x="268" y="241">Blogged by <tspan font-weight="bold">2</tspan></text><text x="268" y="265">Tweeted by <tspan font-weight="bold">24</tspan></text><text x="268" y="289">On <tspan font-weight="bold">5</tspan> Facebook pages</text><text x="268" y="313">Mentioned in <tspan font-weight="bold">1</tspan> Google+ posts</text><text x="268" y="337"><tspan font-weight="bold">28</tspan> readers on Mendeley</text></g>
<text x="22" y="450" font-size="21" font-weight="bold">Full text views</text>
<text x="22" y="481" font-size="12.3" fill="#555">Full text views reflects the number of PDF downloads, PDFs sent to Google Drive, Dropbox and Kindle and HTML full text views.</text>
<text x="22" y="528" font-size="22" fill="#444">Total number of HTML views:</text><rect x="358" y="503" width="34" height="34" rx="3" fill="#555"/><text x="375" y="527" font-size="15" font-weight="bold" fill="#fff" text-anchor="middle">44</text>
<text x="433" y="528" font-size="22" fill="#444">Total number of PDF views:</text><rect x="749" y="503" width="48" height="34" rx="3" fill="#555"/><text x="773" y="527" font-size="15" font-weight="bold" fill="#fff" text-anchor="middle">178</text><text x="806" y="526" font-size="20">*</text>
<path d="M150 586H995M150 629H995M150 673H995M150 716H995M150 759H995M150 802H995M150 845H995M150 888H995M150 932H995" stroke="#e6e6e6" stroke-width="2"/>
<g font-size="11" fill="#555" text-anchor="end"><text x="138" y="590">220</text><text x="138" y="633">200</text><text x="138" y="677">180</text><text x="138" y="720">160</text><text x="138" y="763">140</text><text x="138" y="806">120</text><text x="138" y="849">100</text><text x="138" y="892">80</text><text x="138" y="936">60</text></g>
<g font-size="11.5" fill="#555" text-anchor="middle"><text x="214" y="976">Sep 2019</text><text x="334" y="976">Oct 2019</text><text x="454" y="976">Nov 2019</text><text x="574" y="976">Dec 2019</text><text x="694" y="976">Jan 2020</text><text x="814" y="976">Feb 2020</text><text x="934" y="976">Mar 2020</text><text x="575" y="1031">Months</text></g>
<text transform="translate(32 760) rotate(-90)" font-size="11" fill="#555" text-anchor="middle">Cumulative views</text>
<path d="M214 936L334 918L454 906L574 902L694 880L814 700L934 582" stroke="#3d6fd8" stroke-width="2.5" fill="none"/>
<g fill="#3d6fd8"><circle cx="214" cy="936" r="3.5"/><circle cx="334" cy="918" r="3.5"/><circle cx="454" cy="906" r="3.5"/><circle cx="574" cy="902" r="3.5"/><circle cx="694" cy="880" r="3.5"/><circle cx="814" cy="700" r="3.5"/><circle cx="934" cy="582" r="3.5"/></g>
<rect x="22" y="1081" width="304" height="46" rx="2" fill="#0a6ed1"/><text x="38" y="1110" font-size="16" font-weight="bold" fill="#fff">View data table for this chart</text>
<text x="22" y="1208" font-size="21" font-weight="bold">Abstract views</text>
<text x="22" y="1240" font-size="12.3" fill="#555">Abstract views reflect the number of visits to the article landing page.</text>
<text x="22" y="1286" font-size="22" fill="#444">Total abstract views:</text><rect x="259" y="1262" width="46" height="34" rx="3" fill="#555"/><text x="282" y="1286" font-size="15" font-weight="bold" fill="#fff" text-anchor="middle">536</text><text x="315" y="1284" font-size="20">*</text>
</g></svg>
</div>

<!-- ================= PANEL 3 ================= -->
<div class="p" style="left:1610px">
<div class="a" style="left:0;top:0;width:700px;height:20px;background:#1c1c1c"></div>
<div class="a" style="left:500px;top:80px;width:150px;height:620px;background:#f2f2f2;border-radius:3px"></div>
<div class="a" style="left:137px;top:283px;width:173px;height:78px;background:#f2f2f2"></div>
<div class="a" style="left:319px;top:283px;width:173px;height:78px;background:#f2f2f2"></div>
<div class="a" style="left:137px;top:444px;width:355px;height:39px;background:#f2f2f2"></div>
<svg class="a" style="left:0;top:0" width="700" height="680">
<path d="M10 3H22V10Q22 14 16 17Q10 14 10 10Z" fill="#b2282e"/><path d="M15 3H17V16H15ZM10 8.5H22V10.5H10Z" fill="#fff"/>
<path d="M0 37.5H700M0 55.5H700M0 72.5H700" stroke="#e6e6e6"/>
<path d="M129.5 79V680" stroke="#ececec"/>
<circle cx="644" cy="27" r="3.3" stroke="#333" stroke-width="1.2" fill="none"/><path d="M646.5 29.5L649.5 32.5" stroke="#333" stroke-width="1.3"/>
<rect x="547" y="40" width="13" height="13" fill="#51677d"/><path d="M553.5 41.5V51.5M549 46H558" stroke="#fff" stroke-width="1.4"/>
<circle cx="575.5" cy="43.5" r="2.2" stroke="#333" fill="none" stroke-width=".9"/><path d="M571.5 51.5Q571.5 47 575.5 47Q579.5 47 579.5 51.5Z" stroke="#333" fill="none" stroke-width=".9"/>
<rect x="586.5" y="41.5" width="48" height="11" stroke="#666" fill="none" stroke-width=".8"/>
<path d="M638.5 42H641L642.5 49H649L650 44H641.5" stroke="#333" fill="none" stroke-width=".9"/><circle cx="643.5" cy="51.3" r=".9" fill="#333"/><circle cx="648" cy="51.3" r=".9" fill="#333"/>
<rect x="49" y="86" width="73" height="101" fill="#16314f"/><rect x="49" y="116.5" width="73" height="2.5" fill="#6fa6db"/>
<rect x="58" y="124" width="12" height="11" fill="#e8a96a"/><rect x="72" y="124" width="12" height="11" fill="#e9b07a"/><rect x="86" y="124" width="12" height="11" fill="#e5b8a0"/>
<rect x="58" y="137" width="12" height="11" fill="#e8a96a"/><rect x="72" y="137" width="12" height="11" fill="#e79c62"/><rect x="86" y="137" width="12" height="11" fill="#e5b8a0"/>
<path d="M58 153H100M58 156H98M58 159H90M55 181H65M72 181H84" stroke="#5e7792" stroke-width=".8"/>
<circle cx="54.5" cy="197.5" r="5" stroke="#999" fill="#fff" stroke-width=".7"/><path d="M55.5 195.5L53.5 197.5L55.5 199.5" stroke="#666" fill="none" stroke-width=".7"/>
<circle cx="116.5" cy="197.5" r="5" stroke="#999" fill="#fff" stroke-width=".7"/><path d="M115.5 195.5L117.5 197.5L115.5 199.5" stroke="#666" fill="none" stroke-width=".7"/>
<path d="M49 231.5H122" stroke="#e2e2e2"/>
<rect x="137" y="206.5" width="354" height="1.6" fill="#333"/>
<circle cx="183.5" cy="181" r="4.2" fill="#a6ce39"/><circle cx="240.5" cy="181" r="4.2" fill="#a6ce39"/>
<circle cx="511.5" cy="93" r="2.5" fill="#3b9c37"/><path d="M510.3 93L511.2 94L512.9 92" stroke="#fff" stroke-width=".7" fill="none"/>
<path d="M546 95.5V92.5H550V96.5A2 2 0 0 1 546 96.5M546.6 92.5V90.5A1.4 1.4 0 0 1 549.4 90.5" stroke="#ee8a2d" fill="none" stroke-width=".8"/>
<g fill="none" stroke-width="8"><circle cx="525.5" cy="122.5" r="12.5" stroke="#e8221b" stroke-dasharray="16 80" stroke-dashoffset="0"/><circle cx="525.5" cy="122.5" r="12.5" stroke="#f7a823" stroke-dasharray="10 80" stroke-dashoffset="-16"/><circle cx="525.5" cy="122.5" r="12.5" stroke="#74cfee" stroke-dasharray="12 80" stroke-dashoffset="-26"/><circle cx="525.5" cy="122.5" r="12.5" stroke="#2440b5" stroke-dasharray="14 80" stroke-dashoffset="-38"/><circle cx="525.5" cy="122.5" r="12.5" stroke="#7b2fb0" stroke-dasharray="12 80" stroke-dashoffset="-52"/><circle cx="525.5" cy="122.5" r="12.5" stroke="#d85ab0" stroke-dasharray="15 80" stroke-dashoffset="-64"/></g>
<circle cx="525.5" cy="122.5" r="8.3" fill="#fff"/><text x="525.5" y="124.3" font-size="5" text-anchor="middle" font-weight="bold">1584</text>
<path d="M548.5 106V139M577.5 106V139M609.5 106V139" stroke="#fff" stroke-width="1"/>
<path d="M509 156.5H641M509 290.5H641M509 417.5H641" stroke="#dcdcdc"/>
<rect x="508" y="298" width="133" height="109" fill="#c8c8c8"/>
<rect x="685" y="287" width="15" height="51" rx="2" fill="#1e73be"/><text transform="translate(695 312.5) rotate(-90)" font-size="5.2" fill="#fff" text-anchor="middle">Feedback</text>
<!-- peer review graphics -->
<circle cx="198.5" cy="305" r="4" fill="#a6ce39"/><circle cx="380.5" cy="305" r="4" fill="#a6ce39"/><circle cx="196" cy="430" r="4" fill="#a6ce39"/>
<rect x="146.5" y="337.5" width="49" height="15" fill="#fff" stroke="#777" stroke-width=".8"/><rect x="328.5" y="337.5" width="49" height="15" fill="#fff" stroke="#777" stroke-width=".8"/>
<path d="M137 370.5H492" stroke="#e6e6e6" stroke-width="1.5"/>
<rect x="385.5" y="380.5" width="53" height="15.5" fill="#fff" stroke="#888" stroke-width=".8"/><rect x="443.5" y="380.5" width="48.5" height="15.5" fill="#fff" stroke="#888" stroke-width=".8"/>
<circle cx="158" cy="602" r="19" fill="#f4f4f4" stroke="#ececec" stroke-width="4"/>
<path d="M158 583A19 19 0 1 1 153 620.3" fill="none" stroke="#8a2aa8" stroke-width="4"/>
<path d="M197 598.5H492M197 617.5H492M197 634.5H492" stroke="#e8e8e8"/>
<circle cx="485" cy="590" r="6" fill="#eee"/><circle cx="485" cy="608" r="6" fill="#eee"/><circle cx="485" cy="626" r="6" fill="#eee"/>
</svg>
<div class="a" style="left:25px;top:2px;font-family:'Liberation Serif',serif;font-size:7.5px;color:#fff;letter-spacing:.4px">CAMBRIDGE</div>
<div class="a" style="left:25px;top:11px;font-family:'Liberation Serif',serif;font-size:4px;color:#fff;letter-spacing:.3px">UNIVERSITY PRESS</div>
<div class="a nv" style="left:98px">Academic ⌄</div><div class="a nv" style="left:156px">Cambridge English</div><div class="a nv" style="left:232px">Education</div><div class="a nv" style="left:283px">Bibles</div><div class="a nv" style="left:321px">Digital Products ⌄</div><div class="a nv" style="left:389px">About Us</div><div class="a nv" style="left:447px">Careers</div>
<div class="a" style="left:50px;top:23.6px;font-size:9px;color:#333">Cambridge <b>Core</b></div>
<div class="a" style="right:67px;top:25.5px;font-size:5.8px;color:#666">Search Cambridge Core</div>
<div class="a nr" style="left:50px">Browse Subjects</div><div class="a nr" style="left:105px">What we publish</div><div class="a nr" style="left:162px">Services</div><div class="a nr" style="left:196px">About Cambridge Core</div>
<div class="a" style="right:156px;top:44px;font-size:4.8px;color:#666">Institution:</div>
<div class="a" style="left:586px;top:44px;width:49px;text-align:center;font-size:4.8px;color:#444">My account</div>
<div class="a" style="left:50px;top:61px;font-size:5.2px;color:#999"><span class="bl">Journal name</span> &nbsp;›&nbsp; <span class="bl">Volume</span> &nbsp;›&nbsp; <span class="bl">Issue</span> &nbsp;›&nbsp; <b style="color:#444">Name of article</b></div>
<div class="a" style="right:50px;top:61px;font-size:5px;color:#666">English | <b class="bl">Français</b></div>
<div class="a b" style="left:53px;top:92px;font-size:6px;color:#fff;line-height:7.5px">HIGH POWER<br>LASER</div>
<div class="a" style="left:67px;top:194.3px;font-size:4.8px;color:#555">Browse articles</div>
<div class="a b u" style="left:49px;top:212.6px;font-size:5.6px;color:#333">High Power Laser</div>
<div class="a b" style="left:49px;top:240.2px;font-size:8px">Article contents</div>
<div class="a lc b" style="top:258.7px">Abstract</div><div class="a lc" style="top:271.7px">Main heading</div><div class="a lc" style="top:284.7px">Subheading</div><div class="a lc" style="top:298.7px">Subheading</div><div class="a lc" style="top:311.7px">Subheading</div><div class="a lc" style="top:324.7px">Footnotes</div><div class="a lc" style="top:337.7px">References</div>
<div class="a b" style="left:137px;top:87px;font-size:13px;line-height:15.5px">Rapid one-step synthesis of gold nanoparticles using the<br>ubiquitous coenzyme NADH</div>
<div class="a b" style="left:137px;top:124px;font-size:8.3px">This represents a subtitle if required</div>
<div class="a" style="left:137px;top:143px;font-size:4.8px;color:#555">Part of:</div>
<div class="a" style="left:159px;top:139px;width:52px;height:14px;background:#e8e8e8;border-radius:2px;font-size:4.8px;line-height:14px;text-align:center;color:#555">Collection name</div>
<div class="a" style="left:137px;top:165.6px;font-size:5.6px;color:#444">Published online by Cambridge University Press: <b>10 May 2018</b></div>
<div class="a bl" style="left:137px;top:177.4px;font-size:6px">Author Name</div><div class="a bl" style="left:194px;top:177.4px;font-size:6px">Author Name</div>
<div class="a" style="left:181.3px;top:179px;font-size:3.6px;color:#fff">iD</div><div class="a" style="left:238.3px;top:179px;font-size:3.6px;color:#fff">iD</div>
<div class="a" style="right:209px;top:178px;font-size:4.8px;color:#666">Show author details ⌄</div>
<div class="a" style="left:515px;top:89.8px;font-size:5.3px;color:#3b9c37">Access</div><div class="a" style="left:552px;top:89.8px;font-size:5.3px;color:#ee8a2d">Open access</div>
<div class="a" style="left:511px;top:141.2px;font-size:4.6px;color:#555">Altmetrics</div>
<div class="a b" style="left:551px;top:117px;font-size:8px">130</div><div class="a" style="left:551px;top:127px;font-size:4.6px;line-height:6.2px;color:#666">Full text<br>views</div>
<div class="a b" style="left:581px;top:117px;font-size:8px">42</div><div class="a" style="left:581px;top:127px;font-size:4.6px;line-height:6.2px;color:#666">Abstract<br>views</div>
<div class="a b" style="left:613px;top:117px;font-size:8px">1</div><div class="a u" style="left:613px;top:127px;font-size:4.6px;color:#666">Cited by</div>
<div class="a b" style="left:509px;top:165.7px;font-size:8.8px">Linked content</div>
<div class="a sp" style="top:185px">Please note a <u>correction</u> has been issued for<br>this article.</div>
<div class="a sp" style="top:206px">This is a translation of: <b class="bl">Lorem ipsum dolor</b><br><b class="bl">sit amet consectetur adipiscing elit</b></div>
<div class="a sp" style="top:227px">Discussed in: <b class="bl">Lorem ipsum dolor sit amet</b><br><b class="bl">consectetur adipiscing elit</b></div>
<div class="a sp" style="top:249px">In response to: <b class="bl">In eget blandit ex, vel porta</b><br><b class="bl">metus. Vestibulum aliquet fermentum</b><br><b class="bl">turpis, sed tristique sem interdum vel.</b><br><u>Related commentaries</u> (29) <u>Author response</u></div>
<div class="a b" style="left:508px;top:338px;width:133px;text-align:center;font-size:12px;line-height:14.5px;color:#fff">MPU<br>ADVERT</div>
<div class="a b" style="left:509px;top:426.7px;font-size:7.2px">Related content</div>
<div class="a rc b bl" style="top:445.5px">Lorem ipsum dolor sit amet, dores consectetur<br>adipiscing elit, sed do eiusmod nores tempor<br>incididunt ut labore dora norest dor torets</div>
<div class="a rm u" style="top:470px">Author Name , Author Name</div><div class="a rm u" style="top:479px">Journal, Volume</div><div class="a rm" style="top:487px">Published online: 20 January 2017</div>
<div class="a rc b bl" style="top:502.5px">Lorem ipsum dolor sit amet, dores consectetur<br>adipiscing elit, sed do eiusmod nores tempor<br>incididunt ut labore dora norest dor torets</div>
<div class="a rm u" style="top:527px">Author Name , Author Name</div><div class="a rm u" style="top:536px">Journal, Volume</div><div class="a rm" style="top:544px">Published online: 20 January 2017</div>
<div class="a rc b bl" style="top:559.5px">Lorem ipsum dolor sit amet, dores consectetur<br>adipiscing elit, sed do eiusmod nores tempor<br>incididunt ut labore dora norest dor torets</div>
<div class="a rm u" style="top:584px">Author Name , Author Name</div><div class="a rm u" style="top:593px">Journal, Volume</div><div class="a rm" style="top:601px">Published online: 20 January 2017</div>
<!-- tabs -->
<div class="a tb" style="left:143px">Article</div><div class="a tb" style="left:172px">Figures</div>
<div class="a tb" style="left:203px">Supplementary materials</div>
<div class="tba" style="left:279px;width:46px">Peer review</div>
<div class="a tb" style="left:328px">Correction</div><div class="a tb" style="left:369px">Metrics</div><div class="a tb" style="left:401px">eLetters</div>
<!-- main: peer review -->
<div class="a" style="left:137px;top:223.5px;font-size:7.5px;color:#333">Reviewing editor: <span class="bl">Editor Name</span></div>
<div class="a" style="left:137px;top:236px;font-size:7.3px;line-height:11.7px;color:#333">This paper has been accepted because it is scientifically sound; has the correct controls;<br>has appropriate methodology; is statistically valid; has been sent for additional statistical<br>evaluation and met required criteria.</div>
<div class="a b" style="left:146px;top:288.6px;font-size:7.3px">Review 1</div>
<div class="a bl" style="left:146px;top:301.5px;font-size:5.8px">Author Name</div>
<div class="a" style="left:146px;top:315px;font-size:5px;line-height:8px;color:#444">Job title credentials,can be quite long, this block is<br>designed to flow over a few lines</div>
<div class="a" style="left:146px;top:342.2px;width:50px;text-align:center;font-size:4.6px;color:#444">View review</div>
<div class="a b" style="left:328px;top:288.6px;font-size:7.3px">Review 2</div>
<div class="a bl" style="left:328px;top:301.5px;font-size:5.8px">Author Name</div>
<div class="a" style="left:328px;top:315px;font-size:5px;line-height:8px;color:#444">Job title credentials,can be quite long, this block is<br>designed to flow over a few lines</div>
<div class="a" style="left:328px;top:342.2px;width:50px;text-align:center;font-size:4.6px;color:#444">View review</div>
<div class="a b" style="left:137px;top:381.5px;font-size:12.5px">Review 1</div>
<div class="a" style="left:385px;top:385.5px;width:54px;text-align:center;font-size:4.6px;color:#444">Export citation</div>
<div class="a" style="left:443px;top:385.5px;width:49px;text-align:center;font-size:4.6px;color:#444">View metrics</div>
<div class="a" style="left:137px;top:402.7px;font-size:5.5px;color:#444"><u>http://dx.doi.org/10.1017/S1466252316000128</u> &nbsp;© Name of copyright</div>
<div class="a" style="left:137px;top:415.7px;font-size:5.5px;color:#444">Published online: <b>10 May 2018</b></div>
<div class="a bl" style="left:137px;top:426.5px;font-size:5.8px">Reviewer Name</div>
<div class="a" style="left:201px;top:426.7px;font-size:5.5px;color:#444">Job title, credentials</div>
<div class="a b" style="left:143px;top:449.7px;font-size:5.5px">Conflict of interest statement</div>
<div class="a" style="left:143px;top:461.8px;font-size:5.2px;line-height:9px;color:#444">Lorem ipsum dolor sit amet, consectetur adipiscing elit, sed do eiusmod tempor incididunt ut labore et dolore magna<br>aliqua. Ut enim ad minim veniam, quis nostrud exercitation ullamco laboris nisi ut aliquip ex ea commodo consequat.</div>
<div class="a b" style="left:137px;top:493.2px;font-size:8px">Comments</div>
<div class="a" style="left:137px;top:505px;font-size:7.3px;line-height:12px;color:#333">Lorem ipsum dolor sit amet, consectetuer adipiscing elit. Aenean commodo ligula eget dolor.<br>Aenean massa. Cum sociis natoque penatibus et magnis dis parturient montes, nascetur<br>ridiculus mus. Donec quam felis, ultricies nec, pellentesque eu, pretium quis, sem. Nulla<br>consequat massa quis enim donec.</div>
<div class="a b" style="left:137px;top:563.2px;font-size:8px">Presentation</div>
<div class="a" style="left:139px;top:593.5px;width:38px;text-align:center;font-size:9px;color:#444">3.1</div>
<div class="a" style="left:139px;top:606px;width:38px;text-align:center;font-size:4px;color:#aaa">/5</div>
<div class="a" style="left:197px;top:587px;font-size:5px;color:#444">Is the article written in clear and proper English? (30%)</div>
<div class="a" style="left:197px;top:605px;font-size:5px;color:#444">Is the data presented in the most useful manner? (40%)</div>
<div class="a" style="left:197px;top:623px;font-size:5px;color:#444">Does the paper cite relevant &amp; related articles appropriately? (30%)</div>
<div class="a" style="left:480px;top:585px;font-size:8px;color:#444">3<span style="font-size:3.5px">/5</span></div>
<div class="a" style="left:480px;top:603px;font-size:8px;color:#444">4<span style="font-size:3.5px">/5</span></div>
<div class="a" style="left:480px;top:621px;font-size:8px;color:#444">2<span style="font-size:3.5px">/5</span></div>
</div>
</body></html>
